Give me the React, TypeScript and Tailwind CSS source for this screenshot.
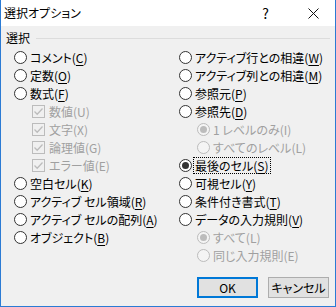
import type { ReactNode } from 'react';

const FONT = "[font-family:'Noto_Sans_CJK_JP','Noto_Sans',sans-serif] [font-feature-settings:'palt']";

function Radio({ checked, disabled }: { checked?: boolean; disabled?: boolean }) {
  return (
    <span
      className={`flex h-[13px] w-[13px] shrink-0 items-center justify-center rounded-full border ${
        disabled ? 'border-[#bcbcbc] bg-[#f4f4f4]' : 'border-[#333333] bg-white'
      }`}
    >
      {checked && <span className={`h-[7px] w-[7px] rounded-full ${disabled ? 'bg-[#bcbcbc]' : 'bg-[#333333]'}`} />}
    </span>
  );
}

function Check() {
  return (
    <span className="flex h-[13px] w-[13px] shrink-0 items-center justify-center border border-[#bcbcbc] bg-[#f0f0f0]">
      <svg width="11" height="11" viewBox="0 0 11 11">
        <path d="M1.5 5.5 L4.2 8.2 L9.5 2.5" fill="none" stroke="#bcbcbc" strokeWidth="1.3" />
      </svg>
    </span>
  );
}

function Key({ k }: { k: string }) {
  return (
    <>
      (<span className="underline underline-offset-2">{k}</span>)
    </>
  );
}

function Row({
  children,
  sub,
  disabled,
  box,
  checked,
  focus,
}: {
  children: ReactNode;
  sub?: boolean;
  disabled?: boolean;
  box?: boolean;
  checked?: boolean;
  focus?: boolean;
}) {
  return (
    <div className={`flex h-[18px] items-center ${sub ? 'pl-[18px]' : ''}`}>
      {box ? <Check /> : <Radio checked={checked} disabled={disabled} />}
      <span
        className={`ml-[2px] whitespace-nowrap px-[1px] leading-[15px] ${disabled ? 'text-[#a0a0a0]' : 'text-black'} ${
          box ? 'ml-[3px]' : ''
        } ${focus ? 'outline outline-1 outline-dotted outline-black' : ''}`}
      >
        {children}
      </span>
    </div>
  );
}

export default function App() {
  return (
    <div className={`flex h-[307px] w-[336px] flex-col overflow-hidden border-x border-b border-[#2b7bd4] text-[12px] ${FONT}`}>
      <div className="flex h-[26px] shrink-0 items-center bg-white pl-[3px] text-black">
        <span className="text-[12px]">選択オプション</span>
        <span className="ml-auto mr-[39px] text-[14px] leading-none">?</span>
        <svg width="11" height="11" viewBox="0 0 11 11" className="mr-[16px]">
          <path d="M0.5 0.5 L10.5 10.5 M10.5 0.5 L0.5 10.5" stroke="#111" strokeWidth="1" />
        </svg>
      </div>

      <div className="flex flex-1 flex-col bg-[#f0f0f0]">
        <div className="mt-[3px] flex h-[18px] items-center pl-[5px] pr-[5px]">
          <span>選択</span>
          <div className="ml-[6px] flex-1 border-t border-[#dcdcdc]" />
        </div>

        <div className="mt-[1px] grid grid-cols-[165px_1fr] pl-[13px]">
          <div className="flex flex-col">
            <Row>コメント<Key k="C" /></Row>
            <Row>定数<Key k="O" /></Row>
            <Row>数式<Key k="F" /></Row>
            <Row sub box disabled>数値(U)</Row>
            <Row sub box disabled>文字(X)</Row>
            <Row sub box disabled>論理値(G)</Row>
            <Row sub box disabled>エラー値(E)</Row>
            <Row>空白セル<Key k="K" /></Row>
            <Row>アクティブ セル領域<Key k="R" /></Row>
            <Row>アクティブ セルの配列<Key k="A" /></Row>
            <Row>オブジェクト<Key k="B" /></Row>
          </div>
          <div className="flex flex-col">
            <Row>アクティブ行との相違<Key k="W" /></Row>
            <Row>アクティブ列との相違<Key k="M" /></Row>
            <Row>参照元<Key k="P" /></Row>
            <Row>参照先<Key k="D" /></Row>
            <Row sub disabled checked>1 レベルのみ(I)</Row>
            <Row sub disabled>すべてのレベル(L)</Row>
            <Row checked focus>最後のセル<Key k="S" /></Row>
            <Row>可視セル<Key k="Y" /></Row>
            <Row>条件付き書式<Key k="T" /></Row>
            <Row>データの入力規則<Key k="V" /></Row>
            <Row sub disabled checked>すべて(L)</Row>
            <Row sub disabled>同じ入力規則(E)</Row>
          </div>
        </div>

        <div className="mt-auto mb-[8px] flex justify-end gap-[10px] pr-[6px]">
          <button className="flex h-[21px] w-[61px] items-center justify-center border-2 border-[#0078d7] bg-[#e1e1e1] text-black">
            OK
          </button>
          <button className="flex h-[21px] w-[61px] items-center justify-center border border-[#adadad] bg-[#e1e1e1] text-black">
            キャンセル
          </button>
        </div>
      </div>
    </div>
  );
}
